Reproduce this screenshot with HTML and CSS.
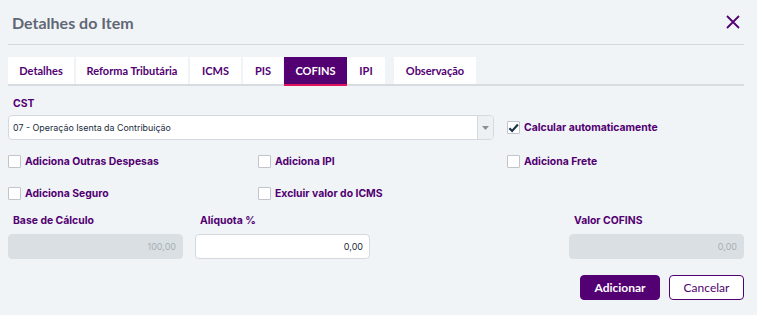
FILE: index.html
```html
<!DOCTYPE html>
<html>
<head>
<meta charset="utf-8">
<link rel="stylesheet" href="styles.css">
</head>
<body>
<div class="modal">
  <div class="header">
    <h1 class="title">Detalhes do Item</h1>
    <button class="close" aria-label="Fechar">
      <svg width="14" height="14" viewBox="0 0 14 14"><path d="M1 1L13 13M13 1L1 13" stroke="#520072" stroke-width="1.8" fill="none"/></svg>
    </button>
  </div>
  <div class="tabs">
    <div class="tab w1">Detalhes</div>
    <div class="tab w2">Reforma Tributária</div>
    <div class="tab w3">ICMS</div>
    <div class="tab w4">PIS</div>
    <div class="tab w5 active">COFINS</div>
    <div class="tab w6">IPI</div>
    <div class="tab w7">Observação</div>
  </div>
  <div class="body">
    <div class="label cst">CST</div>
    <div class="row-cst">
      <div class="select">
        <span class="select-text">07 - Operação Isenta da Contribuição</span>
        <span class="select-arrow"><svg width="7" height="4" viewBox="0 0 7 4"><path d="M0 0H7L3.5 4Z" fill="#8a9096"/></svg></span>
      </div>
      <label class="check"><span class="box checked"><svg width="12" height="10" viewBox="0 0 12 10"><path d="M1.5 5.2L4.5 8.2L10.8 1.2" stroke="#1c3447" stroke-width="2.4" fill="none"/></svg></span>Calcular automaticamente</label>
    </div>
    <div class="grid-checks">
      <label class="check"><span class="box"></span>Adiciona Outras Despesas</label>
      <label class="check"><span class="box"></span>Adiciona IPI</label>
      <label class="check"><span class="box"></span>Adiciona Frete</label>
      <label class="check"><span class="box"></span>Adiciona Seguro</label>
      <label class="check"><span class="box"></span>Excluir valor do ICMS</label>
    </div>
    <div class="fields">
      <div class="field f1">
        <div class="label">Base de Cálculo</div>
        <div class="input disabled">100,00</div>
      </div>
      <div class="field f2">
        <div class="label">Alíquota %</div>
        <div class="input">0,00</div>
      </div>
      <div class="field f3">
        <div class="label">Valor COFINS</div>
        <div class="input disabled">0,00</div>
      </div>
    </div>
    <div class="actions">
      <button class="btn primary">Adicionar</button>
      <button class="btn secondary">Cancelar</button>
    </div>
  </div>
</div>
</body>
</html>
```
FILE: styles.css
```css
html, body {
  margin: 0;
  padding: 0;
  background: #f1f4f6;
}
body {
  font-family: "Inter", "Liberation Sans", sans-serif;
  color: #520072;
  width: 757px;
  height: 315px;
  overflow: hidden;
}
.modal {
  padding: 0 13px 0 8px;
}
.header {
  height: 45px;
  border-bottom: 1px solid #d3d9de;
  display: flex;
  align-items: center;
  justify-content: space-between;
  box-sizing: border-box;
}
.title {
  margin: 0 0 0 4px;
  font-family: "Lato", "Liberation Sans", sans-serif;
  font-weight: 700;
  font-size: 16px;
  color: #5f6775;
}
.close {
  background: none;
  border: 0;
  padding: 0;
  margin-right: 4px;
  width: 14px;
  height: 14px;
  display: flex;
}
.tabs {
  margin-top: 12px;
  display: flex;
  gap: 2px;
  border-bottom: 2px solid #d6dce1;
  height: 29px;
  box-sizing: border-box;
}
.tab {
  background: #fff;
  height: 27px;
  display: flex;
  align-items: center;
  justify-content: center;
  font-family: "Lato", "Liberation Sans", sans-serif;
  font-weight: 700;
  font-size: 11px;
  color: #520072;
  box-sizing: border-box;
}
.w1 { width: 66px; }
.w2 { width: 112px; }
.w3 { width: 51px; }
.w4 { width: 40px; }
.w5 { width: 63px; margin-left: -1px; }
.w6 { width: 38px; margin-left: -2px; }
.w7 { width: 82px; margin-left: 7px; }
.tab.active {
  background: #520072;
  color: #fff;
  border-bottom: 2px solid #e0135f;
  height: 29px;
}
.body {
  padding-top: 10px;
}
.label {
  font-size: 10.4px;
  font-weight: 700;
  color: #520072;
  padding-left: 5px;
  height: 16px;
  line-height: 16px;
}
.row-cst {
  margin-top: 3px;
  display: flex;
  align-items: center;
  gap: 13px;
}
.select {
  width: 486px;
  height: 25px;
  box-sizing: border-box;
  background: #fff;
  border: 1px solid #d3d9de;
  border-radius: 4px;
  display: flex;
  align-items: center;
  overflow: hidden;
}
.select-text {
  flex: 1;
  padding-left: 4px;
  font-size: 8.9px;
  color: #1a2c3c;
}
.select-arrow {
  width: 15px;
  height: 100%;
  background: #eef1f3;
  border-left: 1px solid #d3d9de;
  display: flex;
  align-items: center;
  justify-content: center;
}
.check {
  display: flex;
  align-items: center;
  gap: 4px;
  font-size: 10.4px;
  font-weight: 700;
  color: #520072;
  height: 16px;
}
.box {
  width: 13px;
  height: 13px;
  box-sizing: border-box;
  border: 1px solid #bfc5cb;
  border-radius: 1px;
  background: #fff;
  display: flex;
  align-items: center;
  justify-content: center;
  flex: none;
}
.grid-checks {
  margin-top: 13px;
  display: grid;
  grid-template-columns: 250px 249px 1fr;
  row-gap: 16px;
}
.fields {
  margin-top: 12px;
  display: flex;
}
.field {
  width: 175px;
}
.f2 { margin-left: 12px; }
.f3 { margin-left: auto; }
.field .label {
  margin-bottom: 5px;
}
.input {
  height: 25px;
  box-sizing: border-box;
  border-radius: 4px;
  border: 1px solid #d3d9de;
  background: #fff;
  text-align: right;
  padding-right: 6px;
  font-size: 9px;
  line-height: 23px;
  color: #1a2c3c;
}
.input.disabled {
  background: #d9dfe2;
  border-color: #d9dfe2;
  color: #a8afb5;
}
.actions {
  margin-top: 16px;
  display: flex;
  justify-content: flex-end;
  gap: 9px;
}
.btn {
  height: 25px;
  box-sizing: border-box;
  border-radius: 4px;
  font-family: "Lato", "Liberation Sans", sans-serif;
  font-size: 12px;
  padding: 0;
  cursor: pointer;
}
.primary {
  width: 80px;
  background: #520072;
  border: 1px solid #520072;
  color: #fff;
  font-weight: 700;
}
.secondary {
  width: 75px;
  background: #fff;
  border: 1px solid #520072;
  color: #520072;
}
```
